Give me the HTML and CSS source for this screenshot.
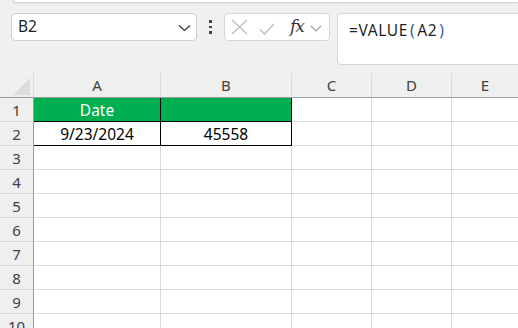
FILE: index.html
```html
<!DOCTYPE html>
<html>
<head>
<meta charset="utf-8">
<link rel="stylesheet" href="styles.css">
</head>
<body>
<div class="ribbon-edge"></div>
<div class="toolbar">
  <div class="namebox">
    <span class="nb-text">B2</span>
    <svg class="chev" width="13" height="8" viewBox="0 0 13 8"><path d="M1 1.5 L6.5 6.5 L12 1.5" fill="none" stroke="#333" stroke-width="1.2"/></svg>
  </div>
  <div class="dots"><i></i><i></i><i></i></div>
  <div class="fxbox">
    <svg class="xicon" width="17" height="16" viewBox="0 0 17 16"><path d="M1 1 L16 15 M16 1 L1 15" stroke="#bcbcbc" stroke-width="1.3" fill="none"/></svg>
    <svg class="check" width="16" height="12" viewBox="0 0 16 12"><path d="M1 6.5 L5.5 11 L15 1" stroke="#bcbcbc" stroke-width="1.3" fill="none"/></svg>
    <span class="fx">fx</span>
    <svg class="chev2" width="12" height="7" viewBox="0 0 12 7"><path d="M1 1 L6 6 L11 1" fill="none" stroke="#9a9a9a" stroke-width="1.1"/></svg>
  </div>
  <div class="formula"><span>=VALUE<b class="p">(</b>A2<b class="p">)</b></span></div>
</div>
<div class="sheet">
  <div class="corner"><span class="tri"></span></div>
  <div class="ch">A</div><div class="ch">B</div><div class="ch">C</div><div class="ch">D</div><div class="ch last">E</div>

  <div class="rh">1</div><div class="c green t-black-r t-black-b">Date</div><div class="c green t-black-r t-black-b"></div><div class="c"></div><div class="c"></div><div class="c last"></div>
  <div class="rh">2</div><div class="c t-black-r t-black-b">9/23/2024</div><div class="c t-black-r t-black-b">45558</div><div class="c"></div><div class="c"></div><div class="c last"></div>
  <div class="rh">3</div><div class="c"></div><div class="c"></div><div class="c"></div><div class="c"></div><div class="c last"></div>
  <div class="rh">4</div><div class="c"></div><div class="c"></div><div class="c"></div><div class="c"></div><div class="c last"></div>
  <div class="rh">5</div><div class="c"></div><div class="c"></div><div class="c"></div><div class="c"></div><div class="c last"></div>
  <div class="rh">6</div><div class="c"></div><div class="c"></div><div class="c"></div><div class="c"></div><div class="c last"></div>
  <div class="rh">7</div><div class="c"></div><div class="c"></div><div class="c"></div><div class="c"></div><div class="c last"></div>
  <div class="rh">8</div><div class="c"></div><div class="c"></div><div class="c"></div><div class="c"></div><div class="c last"></div>
  <div class="rh">9</div><div class="c"></div><div class="c"></div><div class="c"></div><div class="c"></div><div class="c last"></div>
  <div class="rh">10</div><div class="c"></div><div class="c"></div><div class="c"></div><div class="c"></div><div class="c last"></div>
</div>
</body>
</html>
```
FILE: styles.css
```css
html, body {
  margin: 0;
  padding: 0;
  background: #f0f0f0;
  width: 518px;
  height: 328px;
  overflow: hidden;
  font-family: "Noto Sans", "Open Sans", sans-serif;
}
.ribbon-edge {
  margin-left: 13px;
  height: 2px;
  background: #ffffff;
  border-bottom: 1px solid #d6d6d6;
  border-left: 1px solid #d6d6d6;
  border-bottom-left-radius: 4px;
  box-shadow: 0 1px 2px rgba(0,0,0,0.06);
}
.toolbar {
  display: flex;
  align-items: flex-start;
  padding: 10px 0 0 11px;
  height: 69px;
  box-sizing: border-box;
}
.namebox {
  width: 186px;
  height: 28px;
  box-sizing: border-box;
  background: #fff;
  border: 1px solid #cfcfcf;
  border-radius: 4px;
  display: flex;
  align-items: center;
  justify-content: space-between;
  padding: 0 5px 0 6px;
}
.nb-text {
  font-size: 15.5px;
  color: #1f1f1f;
  line-height: 1;
}
.chev { margin-top: 2px; }
.dots {
  width: 27px;
  height: 28px;
  display: flex;
  flex-direction: column;
  align-items: center;
  justify-content: center;
  gap: 3px;
}
.dots i {
  display: block;
  width: 2.5px;
  height: 2.5px;
  background: #444;
}
.fxbox {
  width: 106px;
  height: 28px;
  box-sizing: border-box;
  background: #fff;
  border: 1px solid #d6d6d6;
  border-radius: 4px;
  display: flex;
  align-items: center;
  padding-left: 6px;
}
.xicon { margin-right: 11px; }
.check { margin-right: 15px; margin-top: 3px; }
.fx {
  font-family: "DejaVu Serif", "Liberation Serif", serif;
  font-style: italic;
  font-size: 17px;
  color: #333;
  letter-spacing: -1px;
  margin-top: -2px;
}
.chev2 { margin-left: 6px; margin-top: 2px; }
.formula {
  margin-left: 7px;
  flex: 1;
  height: 52px;
  box-sizing: border-box;
  background: #fff;
  border: 1px solid #d6d6d6;
  border-right: none;
  border-radius: 4px 0 0 4px;
  padding: 5px 0 0 11px;
  font-size: 15.5px;
  color: #1f1f1f;
  letter-spacing: 0.6px;
}
.formula .p {
  font-weight: normal;
  color: #2f5f9e;
  margin: 0 2px;
}
.sheet {
  margin-top: 1px;
  display: grid;
  grid-template-columns: 34px 127px 131px 80px 80px 1fr;
  grid-template-rows: 25px repeat(10, 24px);
}
.corner {
  background: #efefef;
  border-right: 1px solid #d8d8d8;
  border-bottom: 1px solid #9c9c9c;
  position: relative;
}
.tri {
  position: absolute;
  right: 3px;
  bottom: 2px;
  width: 0;
  height: 0;
  border-left: 17px solid transparent;
  border-bottom: 17px solid #dcdcdc;
}
.ch {
  background: #efefef;
  border-right: 1px solid #d8d8d8;
  border-bottom: 1px solid #9c9c9c;
  display: flex;
  align-items: center;
  justify-content: center;
  font-size: 15px;
  color: #404040;
}
.rh {
  background: #efefef;
  border-right: 1px solid #9c9c9c;
  border-bottom: 1px solid #d8d8d8;
  display: flex;
  align-items: center;
  justify-content: center;
  font-size: 15px;
  color: #404040;
}
.c {
  background: #fff;
  border-right: 1px solid #d9d9d9;
  border-bottom: 1px solid #d9d9d9;
  display: flex;
  align-items: center;
  justify-content: center;
  font-size: 15.5px;
  color: #000;
}
.ch.last, .c.last { border-right: none; }
.green {
  background: #00b050;
  color: #fff;
}
.t-black-r { border-right-color: #000; }
.t-black-b { border-bottom-color: #000; }
```
